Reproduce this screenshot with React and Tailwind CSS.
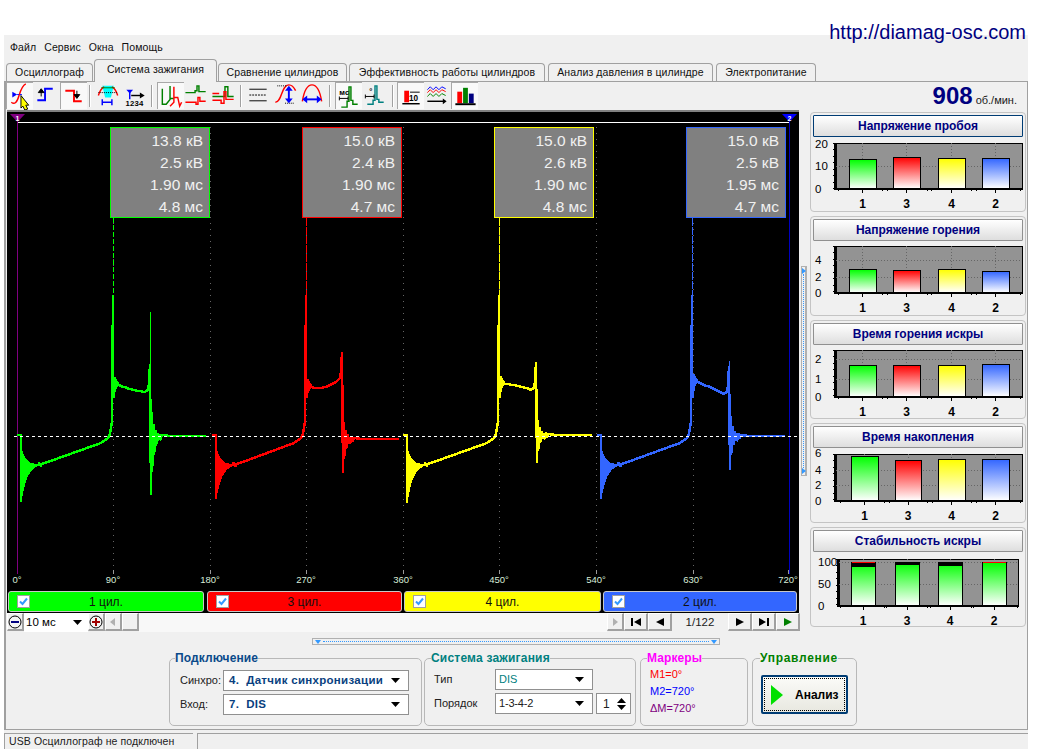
import React from 'react';

const FONT = { fontFamily: '"Liberation Sans", Arial, sans-serif' };

// cylinder waveform data, page coordinates
const waves = [
  { color: '#00ff00', x0: 21, end: 210, dxS: 92, dxE: 129, bottom: 502, top: 312, ringDown: 495, ringUp: 403, flat: 436, plateau: [385, 391, 392] },
  { color: '#ff0000', x0: 216, end: 403, dxS: 90, dxE: 126, bottom: 499, top: 368, ringDown: 473, ringUp: 415, flat: 439, plateau: [387, 391, 380] },
  { color: '#ffff00', x0: 407, end: 596, dxS: 92, dxE: 129, bottom: 503, top: 371, ringDown: 463, ringUp: 414, flat: 435, plateau: [384, 385, 390] },
  { color: '#3366ff', x0: 601, end: 789, dxS: 91, dxE: 128, bottom: 499, top: 361, ringDown: 470, ringUp: 408, flat: 436, plateau: [382, 388, 394] },
];

const buildWave = (w) => {
  const p = [];
  const push = (x, y) => p.push(`${p.length ? 'L' : 'M'}${x} ${Math.round(y)}`);
  const { x0, dxS, dxE, flat } = w;
  push(x0 - 4, 435);
  push(x0, 435);
  for (let dx = 0; dx <= 20; dx++) {
    const c = 466 - dx * 0.1;
    push(x0 + dx, c + (w.bottom - 466) * Math.exp(-dx / 5.5));
    push(x0 + dx, c - 19 * Math.exp(-dx / 4.5));
  }
  push(x0 + 24, 463);
  push(x0 + dxS - 12, 443);
  push(x0 + dxS - 5, 438);
  push(x0 + dxS - 3, 434);
  push(x0 + dxS - 1, 422);
  push(x0 + dxS, 295);
  push(x0 + dxS, 372);
  push(x0 + dxS + 1, 398);
  push(x0 + dxS + 2, w.plateau[0] - 8);
  push(x0 + dxS + 3, w.plateau[0] + 4);
  push(x0 + dxS + 4, w.plateau[0] - 3);
  const a = x0 + dxS + 6;
  const b = x0 + dxE - 4;
  for (let x = a; x <= b; x += 2) {
    const t = (x - a) / (b - a);
    const [p0, p1, p2] = w.plateau;
    push(x, (1 - t) * (1 - t) * p0 + 2 * t * (1 - t) * p1 + t * t * p2);
  }
  push(x0 + dxE - 2, w.plateau[2] - 2);
  push(x0 + dxE - 1, w.plateau[2] - 8);
  push(x0 + dxE, w.plateau[2] - 28);
  for (let i = 0; i < 12; i++) {
    const env = Math.exp(-i / 3);
    push(x0 + dxE + 1 + i, i % 2 === 0 ? flat + (w.ringDown - flat) * env : flat - (flat - w.ringUp) * env);
  }
  push(x0 + dxE + 20, flat);
  push(w.end - 4, flat);
  return p.join(' ');
};

const degrees = [
  ['0°', 17], ['90°', 113], ['180°', 210], ['270°', 306], ['360°', 403],
  ['450°', 499], ['540°', 596], ['630°', 693], ['720°', 788],
];

const Oscillogram = () => (
  <svg width="792" height="478" viewBox="7 112 792 478" className="block" style={FONT}>
    {degrees.slice(1, 8).map(([d, x]) => (
      <line key={d} x1={x + 0.5} x2={x + 0.5} y1="127" y2="570" stroke="#666" strokeDasharray="1 5" />
    ))}
    {degrees.map(([d, x]) => (
      <g key={d}>
        <line x1={x + 0.5} x2={x + 0.5} y1="570" y2="574" stroke="#999" />
        <text x={x} y="583" fontSize="9.5" fill="#d8ecd8" textAnchor="middle">{d}</text>
      </g>
    ))}
    <line x1="17.5" x2="17.5" y1="120" y2="574" stroke="#800080" />
    <line x1="789.5" x2="789.5" y1="120" y2="574" stroke="#0000c0" />
    <line x1="18" x2="789" y1="122.5" y2="122.5" stroke="#ffffff" />
    <polygon points="10,114 25,114 17.5,122" fill="#800080" />
    <text x="17.5" y="121" fontSize="7" fontWeight="bold" fill="#fff" textAnchor="middle">1</text>
    <polygon points="782,114 797,114 789.5,122" fill="#0000ff" />
    <text x="789.5" y="121" fontSize="7" fontWeight="bold" fill="#fff" textAnchor="middle">2</text>
    {waves.map((w) => (
      <g key={w.color} shapeRendering="crispEdges">
        <line x1={w.x0 + w.dxS + 0.5} x2={w.x0 + w.dxS + 0.5} y1="218" y2="296" stroke={w.color} strokeDasharray={w.x0 === 21 ? '5 2' : '8 1'} />
        <line x1={w.x0 + w.dxE + 0.5} x2={w.x0 + w.dxE + 0.5} y1={w.top} y2={w.plateau[2] - 20} stroke={w.color} strokeWidth="1" />
        <path d={buildWave(w)} fill="none" stroke={w.color} strokeWidth="2.5" />
      </g>
    ))}
    <line x1="14" x2="798" y1="436.5" y2="436.5" stroke="#fff" strokeDasharray="3 3" />
  </svg>
);

const readouts = [
  { pos: 'left-[103px]', border: 'border-[#00ff00]', lines: ['13.8 кВ', '2.5 кВ', '1.90 мс', '4.8 мс'] },
  { pos: 'left-[295px]', border: 'border-[#ff0000]', lines: ['15.0 кВ', '2.4 кВ', '1.90 мс', '4.7 мс'] },
  { pos: 'left-[487px]', border: 'border-[#ffff00]', lines: ['15.0 кВ', '2.6 кВ', '1.90 мс', '4.8 мс'] },
  { pos: 'left-[679px]', border: 'border-[#3366ff]', lines: ['15.0 кВ', '2.5 кВ', '1.95 мс', '4.7 мс'] },
];

const cylinders = [
  { label: '1 цил.', bg: 'bg-[#00ff00]', w: 'w-[196px]', ml: 'ml-[1px]' },
  { label: '3 цил.', bg: 'bg-[#ff0000]', w: 'w-[195px]', ml: 'ml-[3px]' },
  { label: '4 цил.', bg: 'bg-[#ffff00]', w: 'w-[197px]', ml: 'ml-[2px]' },
  { label: '2 цил.', bg: 'bg-[#3366ff]', w: 'w-[194px]', ml: 'ml-[2px]' },
];

const CheckBox = () => (
  <span className="w-[13px] h-[13px] bg-white border border-[#a0a0a0] flex items-center justify-center shrink-0">
    <svg width="11" height="11" viewBox="0 0 11 11"><path d="M2 5.5 L4.5 8 L9 2.5" fill="none" stroke="#3399ff" strokeWidth="2" /></svg>
  </span>
);

const SmallBtn = ({ children, className = '' }) => (
  <div className={`h-[18px] bg-[#f0f0f0] border-b-2 border-r-2 border-[#a0a0a0] border-t border-l border-t-white border-l-white flex items-center justify-center ${className}`}>
    {children}
  </div>
);

const NavIcon = ({ d, color = '#000' }) => (
  <svg width="14" height="12" viewBox="0 0 14 12"><path d={d} fill={color} /></svg>
);

const TransportRow = () => (
  <div className="flex h-[19px] items-stretch bg-[#f0f0f0]">
    <SmallBtn className="w-[17px]">
      <svg width="14" height="14" viewBox="0 0 14 14"><circle cx="7" cy="7" r="6" fill="#f4f4f4" stroke="#000" /><rect x="3" y="6" width="8" height="2" fill="#000080" /></svg>
    </SmallBtn>
    <div className="w-[64px] bg-white flex items-center justify-between pl-[2px] pr-[6px] text-[11.5px]">
      <span>10 мс</span>
      <svg width="9" height="5" viewBox="0 0 9 5"><path d="M0 0 H9 L4.5 5 Z" fill="#000" /></svg>
    </div>
    <SmallBtn className="w-[17px]">
      <svg width="14" height="14" viewBox="0 0 14 14"><circle cx="7" cy="7" r="6" fill="#f4f4f4" stroke="#000" /><path d="M3 6 H6 V3 H8 V6 H11 V8 H8 V11 H6 V8 H3 Z" fill="#a00000" /></svg>
    </SmallBtn>
    <SmallBtn className="w-[17px]"><NavIcon d="M9 2 V10 L4 6 Z" color="#b0b0b0" /></SmallBtn>
    <SmallBtn className="w-[17px]" />
    <div className="w-[468px] bg-[#f8f8f8]" />
    <SmallBtn className="w-[17px]"><NavIcon d="M5 2 V10 L10 6 Z" color="#b0b0b0" /></SmallBtn>
    <SmallBtn className="w-[24px]"><NavIcon d="M2 2 H4 V10 H2 Z M12 2 V10 L5 6 Z" /></SmallBtn>
    <SmallBtn className="w-[24px]"><NavIcon d="M11 2 V10 L3 6 Z" /></SmallBtn>
    <div className="w-[56px] flex items-center justify-center text-[11.5px] text-[#202020]">1/122</div>
    <SmallBtn className="w-[24px]"><NavIcon d="M3 2 V10 L11 6 Z" /></SmallBtn>
    <SmallBtn className="w-[24px]"><NavIcon d="M2 2 V10 L9 6 Z M10 2 H12 V10 H10 Z" /></SmallBtn>
    <SmallBtn className="w-[24px]"><NavIcon d="M3 2 V10 L11 6 Z" color="#008000" /></SmallBtn>
  </div>
);

// small toolbar pictures, drawn on a 26x28 box
const ToolIcons = [
  <g key="0"><path d="M4 20 Q9 24 12 13 Q15 3 19 1" fill="none" stroke="#f00" strokeWidth="1.5" /><polygon points="5,9 5,15 10,12" fill="#0000ff" /><line x1="10" x2="16" y1="12" y2="12" stroke="#00f" strokeDasharray="2 1" /><polygon points="14,13 22,23 19,23 21,27 18,28 16,24 14,26" fill="#ffff00" stroke="#000" /></g>,
  <g key="1"><path d="M4 19 H12 V7 H20" fill="none" stroke="#0000ff" strokeWidth="2" /><path d="M8 15 V10 M5 11 L8 7 L11 11 Z" fill="#000" stroke="#000" /></g>,
  <g key="2"><path d="M4 8 H13 V19 H21" fill="none" stroke="#f00" strokeWidth="2" /><path d="M16 8 V13 M13 12 L16 16 L19 12 Z" fill="#000" stroke="#000" /></g>,
  <g key="3"><polygon points="6,4 18,4 15,16 9,16" fill="#00ffff" /><path d="M2 14 Q4 7 8 5 M22 14 Q20 7 16 5" fill="none" stroke="#f00" strokeWidth="1.5" /><path d="M5 6 H19" stroke="#008000" strokeWidth="1" /><line x1="2" x2="22" y1="11" y2="11" stroke="#000" strokeDasharray="1 1" /><path d="M6 21 H16 M6 18 V24 M16 18 V24" stroke="#0000ff" strokeWidth="1.5" fill="none" /></g>,
  <g key="4"><polygon points="3,8 10,8 6.5,12" fill="#0000ff" /><line x1="6.5" x2="6.5" y1="10" y2="18" stroke="#00f" strokeWidth="1.5" /><path d="M8 14 H18" stroke="#000" strokeWidth="1.5" /><polygon points="17,11 22,14 17,17" fill="#000" /><text x="2" y="25" fontSize="8" fontWeight="bold" letterSpacing="0.3" fill="#000">1234</text></g>,
  <g key="5" fill="none" strokeWidth="1.5"><path d="M4 6 V22 H8 L12 17 V3 V16 H16" stroke="#008000" /><path d="M12 24 L16 20 V4 V15 H20 L22 24 L24 20" stroke="#f00" /></g>,
  <g key="6" fill="none" strokeWidth="1.5"><path d="M1 11 H11 V9 H13 V4 H15 V10 H22" stroke="#008000" /><path d="M1 21 H12 V23 H14 V16 H16 V20 H22" stroke="#f00" /></g>,
  <g key="7" fill="none" strokeWidth="1.5"><path d="M1 15 H14 V5 H17 V15 H23" stroke="#008000" /><path d="M1 12 H8 M1 19 H10 V22 H13 V10 H15 V18 H23" stroke="#f00" /></g>,
  <g key="8" stroke="#000" strokeWidth="1"><line x1="4" x2="22" y1="7.5" y2="7.5" /><line x1="4" x2="22" y1="13.5" y2="13.5" strokeDasharray="2 1" /><line x1="4" x2="22" y1="19.5" y2="19.5" /></g>,
  <g key="9"><path d="M3 21 C10 21 9 3 17 3 Q21 3 24 9" fill="none" stroke="#f00" strokeWidth="1.5" /><line x1="5" x2="14" y1="4" y2="4" stroke="#000" strokeDasharray="1 1" /><line x1="13" x2="23" y1="22" y2="22" stroke="#000" strokeDasharray="1 1" /><line x1="17" x2="17" y1="7" y2="19" stroke="#0000ff" strokeWidth="2" /><polygon points="13,9 21,9 17,4" fill="#00f" /><polygon points="13,17 21,17 17,22" fill="#00f" /></g>,
  <g key="10"><path d="M3 20 C5 8 9 3 13 3 C17 3 21 8 23 20" fill="none" stroke="#f00" strokeWidth="1.5" /><line x1="6" x2="20" y1="18" y2="18" stroke="#0000ff" strokeWidth="2" /><polygon points="8,14 8,22 3,18" fill="#00f" /><polygon points="18,14 18,22 23,18" fill="#00f" /></g>,
  <g key="11"><path d="M5 25 H11 V19 H13 V4 H15 V18 H17 V22 H22" fill="none" stroke="#008000" strokeWidth="1.5" /><text x="3" y="12" fontSize="8" fontWeight="bold" fill="#000">мс</text><path d="M3 16 H12 M3 14 V18 M12 14 V18" stroke="#000" fill="none" /></g>,
  <g key="12"><path d="M5 23 H11 V19 H13 V4 H15 V18 H17 V21 H22" fill="none" stroke="#008080" strokeWidth="1.5" /><text x="7" y="12" fontSize="8" fontWeight="bold" fill="#000">°</text><path d="M3 15 H12 M3 13 V17 M12 13 V17" stroke="#000" fill="none" /></g>,
  <g key="13"><rect x="6" y="8" width="5" height="12" fill="#f00" /><line x1="12" x2="22" y1="9.5" y2="9.5" stroke="#000" /><text x="11" y="19" fontSize="8.5" fontWeight="bold" fill="#000">10</text><line x1="4" x2="22" y1="21.5" y2="21.5" stroke="#000" strokeWidth="1.5" /></g>,
  <g key="14" fill="none"><path d="M3 8 L6 5 L9 8 L12 5 L15 8 L18 5 L22 7" stroke="#0000ff" /><path d="M3 11 L6 8 L9 11 L12 8 L15 11 L18 8 L22 10" stroke="#f00" /><path d="M3 15 L6 12 L9 15 L12 12 L15 15 L18 12 L22 14" stroke="#008000" /><path d="M3 20 H20" stroke="#000" strokeWidth="1.5" /><polygon points="19,17 23,20 19,23" fill="#000" /></g>,
  <g key="15"><rect x="5" y="9" width="5" height="12" fill="#f00" /><rect x="11" y="5" width="5" height="16" fill="#008000" /><rect x="17" y="11" width="5" height="10" fill="#000080" /><line x1="3" x2="24" y1="22" y2="22" stroke="#000" strokeWidth="2" /></g>,
];

const ToolBtn = ({ index, pressed }) => (
  <div className={`w-[27px] h-[27px] ${pressed ? 'bg-[#f9f9f9] border-t border-l border-[#a8a8a8]' : ''}`}>
    <svg width="26" height="27" viewBox="0 0 26 28" className="block" style={FONT}>{ToolIcons[index]}</svg>
  </div>
);

const Sep = ({ className }) => <div className={`w-[2px] h-[22px] self-center border-l border-[#a0a0a0] bg-white ${className}`} />;

const Toolbar = () => (
  <div className="flex h-[28px] items-start pr-[10px]">
    <ToolBtn index={0} pressed />
    <ToolBtn index={1} />
    <ToolBtn index={2} pressed />
    <Sep className="ml-[2px] mr-[5px]" />
    <ToolBtn index={3} />
    <ToolBtn index={4} />
    <Sep className="ml-[1px] mr-[4px]" />
    <ToolBtn index={5} pressed />
    <ToolBtn index={6} />
    <ToolBtn index={7} />
    <Sep className="ml-[2px] mr-[3px]" />
    <ToolBtn index={8} />
    <ToolBtn index={9} />
    <ToolBtn index={10} />
    <Sep className="ml-[3px] mr-[4px]" />
    <ToolBtn index={11} pressed />
    <ToolBtn index={12} />
    <Sep className="ml-[3px] mr-[3px]" />
    <ToolBtn index={13} pressed />
    <ToolBtn index={14} />
    <ToolBtn index={15} pressed />
    <div className="ml-auto flex items-baseline text-[#000080]">
      <span className="text-[24px] leading-[28px] font-bold">908</span>
      <span className="ml-[3px] text-[11px] text-[#202020]">об./мин.</span>
    </div>
  </div>
);

// bar charts of the right column, page coordinates again
const barColors = { 1: '#00ff00', 3: '#ff0000', 4: '#ffff00', 2: '#3366ff' };

const charts = [
  {
    title: 'Напряжение пробоя', focused: true, top: 137, h: 74, plot: [836, 143, 1022, 189],
    ticks: [['20', 144], ['10', 166], ['0', 189]], grid: [166],
    bars: [[1, 849, 876, 159], [3, 893, 920, 157], [4, 938, 965, 158], [2, 982, 1009, 158]],
  },
  {
    title: 'Напряжение горения', top: 241, h: 74, plot: [836, 246, 1022, 293],
    ticks: [['4', 260], ['2', 277], ['0', 293]], grid: [260, 277],
    bars: [[1, 849, 876, 269], [3, 893, 920, 270], [4, 938, 965, 269], [2, 982, 1009, 271]],
  },
  {
    title: 'Время горения искры', top: 345, h: 73, plot: [836, 350, 1022, 397],
    ticks: [['2', 359], ['1', 379], ['0', 397]], grid: [359, 379],
    bars: [[1, 849, 876, 365], [3, 893, 920, 365], [4, 938, 965, 365], [2, 982, 1009, 364]],
  },
  {
    title: 'Время накопления', top: 448, h: 74, plot: [836, 454, 1022, 501],
    ticks: [['6', 453], ['4', 470], ['2', 485], ['0', 501]], grid: [470, 485],
    bars: [[1, 851, 878, 456], [3, 895, 921, 460], [4, 938, 965, 459], [2, 982, 1009, 459]],
  },
  {
    title: 'Стабильность искры', top: 552, h: 74, plot: [839, 559, 1018, 606],
    ticks: [['100', 562], ['50', 584], ['0', 606]], grid: [562, 584], green: true,
    bars: [[1, 851, 875, 562, 4, true], [3, 895, 919, 562, 2], [4, 938, 962, 562, 3], [2, 982, 1006, 562, 0, true]],
  },
];

const BarChart = ({ c, idx }) => {
  const [l, t, r, b] = c.plot;
  return (
    <svg width="214" height={c.h} viewBox={`811 ${c.top} 214 ${c.h}`} className="block overflow-visible" style={FONT} shapeRendering="crispEdges">
      <defs>
        {[1, 3, 4, 2].map((n) => (
          <linearGradient key={n} id={`bar${idx}${n}`} x1="0" x2="0" y1="0" y2="1">
            <stop offset="0" stopColor={c.green ? '#00ff00' : barColors[n]} />
            <stop offset="1" stopColor="#ffffff" />
          </linearGradient>
        ))}
      </defs>
      <rect x={l} y={t} width={r - l} height={b - t} fill="#939393" stroke="#000" strokeWidth="1" />
      {c.grid.map((y) => <line key={y} x1={l} x2={r} y1={y + 0.5} y2={y + 0.5} stroke="#666" strokeDasharray="1 2" />)}
      {c.bars.map(([n, x1, x2]) => <line key={n} x1={(x1 + x2) / 2} x2={(x1 + x2) / 2} y1={t} y2={b} stroke="#666" strokeDasharray="1 2" />)}
      {c.bars.map(([n, x1, x2, y, black = 0, red]) => (
        <g key={n}>
          <rect x={x1 + 0.5} y={y + 0.5} width={x2 - x1} height={b - y - 1} fill={`url(#bar${idx}${n})`} stroke="#000" />
          {black > 0 && <rect x={x1 + 1} y={y + 1} width={x2 - x1 - 1} height={black} fill="#000" />}
          {red && <rect x={x1 + 1} y={y} width={x2 - x1 - 1} height="1" fill="#ff0000" />}
          <text x={(x1 + x2) / 2} y={b + 19} fontSize="12" fontWeight="bold" textAnchor="middle" shapeRendering="auto">{n}</text>
          <line x1={(x1 + x2) / 2} x2={(x1 + x2) / 2} y1={b} y2={b + 4} stroke="#000" />
          <line x1={x1 - 11} x2={x1 - 11} y1={b} y2={b + 2} stroke="#000" />
          <line x1={x2 + 11} x2={x2 + 11} y1={b} y2={b + 2} stroke="#000" />
        </g>
      ))}
      <line x1={l - 1} x2={l - 1} y1={t} y2={b + 1} stroke="#000" strokeWidth="2" />
      <line x1={l - 1} x2={r} y1={b} y2={b} stroke="#000" strokeWidth="2" />
      {[0, 1, 2, 3, 4, 5, 6, 7].map((i) => <line key={i} x1={l - 3} x2={l} y1={t + i * 6.5} y2={t + i * 6.5} stroke="#000" />)}
      {c.ticks.map(([v, y]) => <text key={v} x={l - 21} y={y + 4} fontSize="11.5" shapeRendering="auto">{v}</text>)}
    </svg>
  );
};

const ChartCard = ({ c, idx }) => (
  <div className="border border-[#c4c4c4] rounded-[4px] pt-[2px]">
    <div className={`mx-[2px] h-[22px] flex items-center justify-center text-[12px] font-bold text-[#000080] bg-gradient-to-b from-white to-[#dedede] border rounded-[1px] ${c.focused ? 'border-[#003c74]' : 'border-[#909090]'}`}>
      {c.title}
    </div>
    <BarChart c={c} idx={idx} />
  </div>
);

const Arrow = () => (
  <svg width="9" height="5" viewBox="0 0 9 5" className="shrink-0"><path d="M0 0 H9 L4.5 5 Z" fill="#000" /></svg>
);

const Combo = ({ children, className }) => (
  <div className={`h-[21px] bg-white border border-[#909090] flex items-center justify-between pr-[8px] ${className}`}>
    <span className="leading-none whitespace-pre">{children}</span>
    <Arrow />
  </div>
);

const Group = ({ title, color, legendClass, className, children }) => (
  <fieldset className={`border border-[#b8b8b8] rounded-[5px] h-[75px] flex-none ${className}`}>
    <legend className={`text-[12px] leading-[14px] font-bold whitespace-nowrap ${legendClass} ${color}`}>{title}</legend>
    {children}
  </fieldset>
);

const tabs = [
  { label: 'Осциллограф', w: 'w-[87px]' },
  { label: 'Система зажигания', w: 'w-[123px]', ml: 'ml-[1px]', active: true },
  { label: 'Сравнение цилиндров', w: 'w-[129px]', ml: 'ml-[1px]' },
  { label: 'Эффективность работы цилиндров', w: 'w-[196px]', ml: 'ml-[2px]' },
  { label: 'Анализ давления в цилиндре', w: 'w-[165px]', ml: 'ml-[3px]' },
  { label: 'Электропитание', w: 'w-[100px]', ml: 'ml-[3px]' },
];

export default function App() {
  return (
    <div className="relative w-[1040px] h-[754px] bg-white overflow-hidden pt-[35px] pl-[4px] text-black" style={FONT}>
      {/* site address, over the window corner */}
      <div className="absolute right-[14px] top-[20px] text-[20px] leading-[24px] text-[#000080]">http://diamag-osc.com</div>

      <div className="w-[1024px] h-[714px] bg-[#f0f0f0] flex flex-col">
        {/* Menu */}
        <div className="h-[25px] flex items-center gap-[8px] pl-[6px] pt-[1px] text-[10.5px] tracking-[0.1px] text-[#101010]">
          <span>Файл</span>
          <span>Сервис</span>
          <span>Окна</span>
          <span>Помощь</span>
        </div>

        {/* Tabs */}
        <div className="h-[21px] flex items-end pl-[2px]">
          {tabs.map((t) => (
            <div
              key={t.label}
              className={`flex items-center justify-center whitespace-nowrap text-[10.5px] tracking-[0.1px] text-[#101010] border border-[#a0a0a0] border-b-0 rounded-t-[4px] ${t.w} ${t.ml || ''} ${t.active ? 'h-[23px] -mb-[1px] bg-[#f0f0f0] z-10 pb-[3px]' : 'h-[18px]'}`}
            >
              {t.label}
            </div>
          ))}
        </div>

        {/* Main panel */}
        <div className="h-[649px] border border-l-2 border-[#a0a0a0] flex flex-col">
          <Toolbar />
          <div className="flex h-[522px]">
            {/* Oscilloscope column */}
            <div className="w-[795px] pl-[1px] flex flex-col">
              <div className="border-t-2 border-[#808080] bg-black relative w-[792px]">
                <Oscillogram />
                {readouts.map((r) => (
                  <div key={r.pos} className={`absolute top-[15px] w-[100px] h-[91px] bg-[#808080] border ${r.pos} ${r.border} flex flex-col items-end pr-[6px] pt-[2px] text-[15.5px] leading-[22px] text-[#f0f0f0]`}>
                    {r.lines.map((line) => <span key={line}>{line}</span>)}
                  </div>
                ))}
                <div className="flex h-[23px] pt-[1px]">
                  {cylinders.map((c) => (
                    <div key={c.label} className={`relative h-[21px] rounded-[3px] border border-[#c8c8c8] flex items-center pl-[8px] ${c.bg} ${c.w} ${c.ml}`}>
                      <CheckBox />
                      <span className="absolute inset-0 flex items-center justify-center text-[12px] text-[#101010]">{c.label}</span>
                    </div>
                  ))}
                </div>
              </div>
              <TransportRow />
            </div>

            {/* Splitter */}
            <div className="w-[6px] flex items-center">
              <div className="w-[6px] h-[210px] border border-[#b0b0b0] border-r-2 flex flex-col items-center justify-between py-[1px]">
                <span className="w-0 h-0 border-y-[3px] border-y-transparent border-l-[4px] border-l-[#3399ff]" />
                <span className="flex-1 w-[1px] border-l border-dotted border-[#3399ff]" />
                <span className="w-0 h-0 border-y-[3px] border-y-transparent border-l-[4px] border-l-[#3399ff]" />
              </div>
            </div>

            {/* Bar charts */}
            <div className="ml-[3px] mt-[2px] w-[216px] flex flex-col gap-[4px]">
              {charts.map((c, i) => <ChartCard key={c.title} c={c} idx={i} />)}
            </div>
          </div>

          {/* Collapse handle */}
          <div className="ml-[306px] mt-[6px] w-[408px] h-[7px] border border-[#b0b0b0] flex items-center justify-between px-[2px]">
            <span className="w-0 h-0 border-x-[3px] border-x-transparent border-t-[4px] border-t-[#3399ff]" />
            <span className="flex-1 mx-[2px] border-t border-dotted border-[#3399ff]" />
            <span className="w-0 h-0 border-x-[3px] border-x-transparent border-t-[4px] border-t-[#3399ff]" />
          </div>

          {/* Bottom groups */}
          <div className="ml-[163px] mt-[6px] flex text-[11px] text-[#202020]">
            <Group title="Подключение" color="text-[#0a4a8a]" legendClass="-ml-[5px] tracking-[0.1px]" className="w-[253px] pl-[10px] pt-[5px]">
              <div className="flex items-center">
                <span className="w-[43px]">Синхро:</span>
                <Combo className="w-[186px] pl-[5px] font-bold text-[#0a3f80] text-[11.5px] tracking-[0.3px]">{'4.  Датчик синхронизации'}</Combo>
              </div>
              <div className="flex items-center mt-[3px]">
                <span className="w-[43px]">Вход:</span>
                <Combo className="w-[186px] pl-[5px] font-bold text-[#0a3f80] text-[11.5px] tracking-[0.3px]">{'7.  DIS'}</Combo>
              </div>
            </Group>

            <Group title="Система зажигания" color="text-[#008080]" legendClass="-ml-[3px] tracking-[0.2px]" className="ml-[2px] w-[212px] pl-[9px] pt-[4px]">
              <div className="flex items-center">
                <span className="w-[61px]">Тип</span>
                <Combo className="w-[98px] pl-[3px] text-[#008080]">DIS</Combo>
              </div>
              <div className="flex items-center mt-[3px]">
                <span className="w-[61px]">Порядок</span>
                <Combo className="w-[98px] pl-[3px] tracking-[-0.2px]">1-3-4-2</Combo>
                <div className="ml-[3px] w-[35px] h-[21px] bg-white border border-[#909090] flex items-center justify-between pl-[6px] pr-[4px] text-[12px]">
                  <span>1</span>
                  <span className="flex flex-col gap-[2px]">
                    <svg width="9" height="5" viewBox="0 0 9 5" className="block"><path d="M0 5 H9 L4.5 0 Z" fill="#000" /></svg>
                    <Arrow />
                  </span>
                </div>
              </div>
            </Group>

            <Group title="Маркеры" color="text-[#ff00ff]" legendClass="-ml-[3px] tracking-[0.1px]" className="ml-[4px] w-[108px] pl-[9px] pt-[1px]">
              <div className="text-[11px] leading-[17px]">
                <div className="text-[#ff0000]">M1=0°</div>
                <div className="text-[#0000ff]">M2=720°</div>
                <div className="text-[#800080]">ΔM=720°</div>
              </div>
            </Group>

            <Group title="Управление" color="text-[#008000]" legendClass="-ml-[1px] tracking-[0.7px]" className="ml-[4px] w-[105px] pl-[8px] pt-[10px]">
              <div className="w-[87px] h-[39px] border-2 border-[#003c74] rounded-[2px] bg-gradient-to-b from-[#fbfbf8] to-[#e8e8e0] p-[1px]">
                <div className="h-full border border-dotted border-black flex items-center pl-[6px]">
                  <svg width="12" height="20" viewBox="0 0 12 20" className="shrink-0"><polygon points="0,0 12,10 0,20" fill="#00e000" /></svg>
                  <span className="ml-[12px] text-[12px] font-bold text-black">Анализ</span>
                </div>
              </div>
            </Group>
          </div>
        </div>

        {/* Status bar */}
        <div className="mt-[3px] h-[16px] flex text-[10.5px] tracking-[0.1px] text-[#202020]">
          <div className="w-[189px] border-t border-l border-[#a0a0a0] pl-[4px] leading-[15px] whitespace-nowrap">USB Осциллограф не подключен</div>
          <div className="ml-[4px] flex-1 border-t border-l border-[#a0a0a0]" />
        </div>
      </div>
    </div>
  );
}
